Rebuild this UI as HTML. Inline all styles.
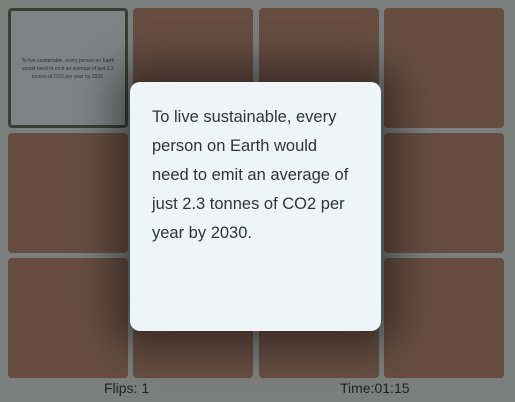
<!DOCTYPE html>
<html><head><style>
html,body{margin:0;padding:0;}
body{width:515px;height:402px;background:#7a7f7e;position:relative;overflow:hidden;font-family:"Liberation Sans",sans-serif;}
.c{position:absolute;width:120px;height:120px;border-radius:4px;background:#664d40;}
.f{background:#7d8383;border:3px solid #3a3f36;box-sizing:border-box;color:#333;font-size:5px;line-height:8px;text-align:center;padding-top:46px;padding-left:6px;padding-right:6px;}
.m{position:absolute;left:130px;top:82px;width:251px;height:249px;border-radius:10px;background:#edf5f8;box-shadow:0 0 40px 16px rgba(0,0,0,0.45);}
.m p{margin:0;position:absolute;left:22px;top:21px;width:230px;font-size:16.5px;line-height:29px;color:#333;white-space:nowrap;}
.ft{position:absolute;top:380px;font-size:14px;color:#222;}
</style></head><body>
<div class="c f" style="left:8px;top:8px">To live sustainable, every person on Earth would need to emit an average of just 2.3 tonnes of CO2 per year by 2030.</div>
<div class="c" style="left:133px;top:8px"></div>
<div class="c" style="left:259px;top:8px"></div>
<div class="c" style="left:384px;top:8px"></div>
<div class="c" style="left:8px;top:133px"></div>
<div class="c" style="left:133px;top:133px"></div>
<div class="c" style="left:259px;top:133px"></div>
<div class="c" style="left:384px;top:133px"></div>
<div class="c" style="left:8px;top:258px"></div>
<div class="c" style="left:133px;top:258px"></div>
<div class="c" style="left:259px;top:258px"></div>
<div class="c" style="left:384px;top:258px"></div>
<div class="m"><p>To live sustainable, every<br>person on Earth would<br>need to emit an average of<br>just 2.3 tonnes of CO2 per<br>year by 2030.</p></div>
<div class="ft" style="left:104px">Flips: 1</div>
<div class="ft" style="left:340px">Time:01:15</div>
</body></html>
